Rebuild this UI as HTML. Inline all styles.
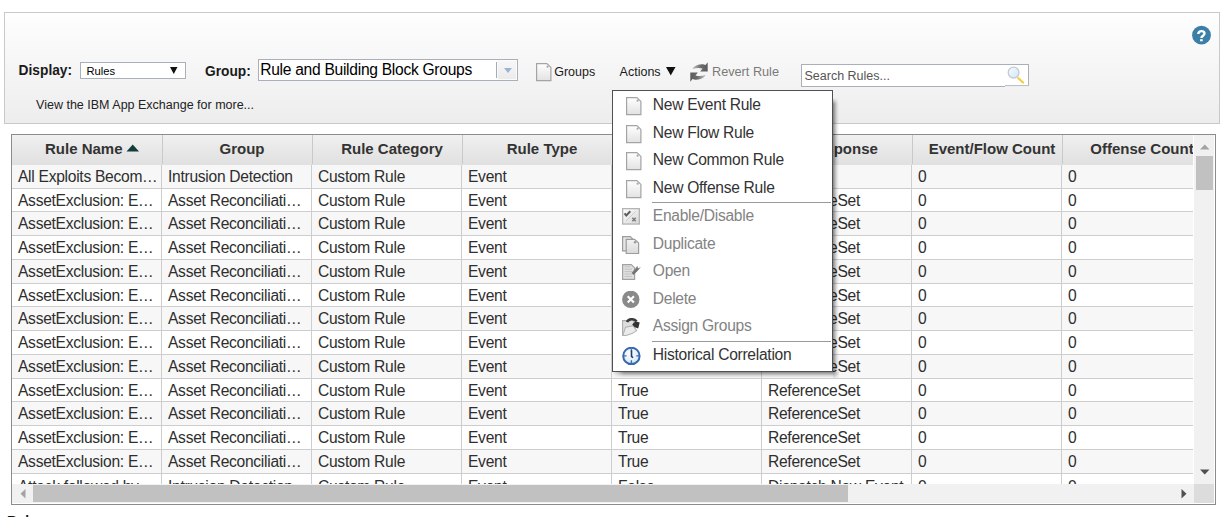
<!DOCTYPE html>
<html><head><meta charset="utf-8"><title>Rules</title>
<style>
html,body{margin:0;padding:0;width:1230px;height:517px;overflow:hidden;background:#fff;font-family:"Liberation Sans",sans-serif;}
.a{position:absolute;white-space:nowrap;}
.b{position:absolute;box-sizing:border-box;}
</style></head><body>

<div class="b" style="left:4px;top:12px;width:1216px;height:112px;border:1px solid #c9c9c9;background:linear-gradient(#fefefe,#ededed);"></div>
<svg class="a" style="left:1188px;top:22px" width="26" height="26"><circle cx="13.5" cy="13.2" r="9.4" fill="#3b7ea7"/><path d="M10.3 12C10.3 10 11.7 9.1 13.4 9.1C15.2 9.1 16.5 10.1 16.5 11.6C16.5 13.7 13.4 13.7 13.4 15.9" fill="none" stroke="#fff" stroke-width="2.4"/><rect x="12.1" y="17.2" width="2.6" height="2.1" fill="#fff"/></svg>
<div class="a" style="left:18.60px;top:62.64px;font-size:13.75px;line-height:16px;font-weight:bold;color:#1a1a1a;">Display:</div>
<div class="b" style="left:80px;top:62px;width:106px;height:17px;border:1px solid #a9b0ba;background:#fff;"></div>
<div class="a" style="left:86.50px;top:65.02px;font-size:11.2px;line-height:13px;font-weight:normal;color:#000;">Rules</div>
<svg class="a" style="left:170px;top:67px" width="8" height="7"><path d="M0 0H7.5L3.75 7Z" fill="#111"/></svg>
<div class="a" style="left:205.00px;top:63.54px;font-size:13.75px;line-height:16px;font-weight:bold;color:#1a1a1a;">Group:</div>
<div class="b" style="left:258px;top:59px;width:260px;height:22px;border:1px solid #a9b0ba;background:#fff;"></div>
<div class="b" style="left:497px;top:60px;width:20px;height:20px;border:1px solid #fbfbfb;background:linear-gradient(#f7f7f7,#ebebeb);"></div>
<div class="b" style="left:496px;top:62px;width:1px;height:16px;background:#a3abb8;"></div>
<svg class="a" style="left:503.5px;top:68px" width="8" height="5"><path d="M0 0H8L4 5Z" fill="#9cb3d6"/></svg>
<div class="a" style="left:260.20px;top:60.49px;font-size:15.6px;line-height:19px;font-weight:normal;color:#000;letter-spacing:-0.28px">Rule and Building Block Groups</div>
<svg class="a" style="left:536px;top:63px" width="16" height="19"><defs><linearGradient id="gd0" x1="0" y1="0" x2="0" y2="1"><stop offset="0" stop-color="#ffffff"/><stop offset="1" stop-color="#e2e2e2"/></linearGradient></defs><path d="M0.6 0.6H10.9L14.9 4.4V17.6H0.6Z" fill="url(#gd0)" stroke="#a4a4a4" stroke-width="1.2"/><circle cx="11.6" cy="3.7" r="1.1" fill="#a8a8a8"/></svg>
<div class="a" style="left:554.20px;top:64.67px;font-size:12.5px;line-height:15px;font-weight:normal;color:#1a1a1a;">Groups</div>
<div class="a" style="left:619.60px;top:64.67px;font-size:12.5px;line-height:15px;font-weight:normal;color:#1a1a1a;">Actions</div>
<svg class="a" style="left:666px;top:67px" width="10" height="9"><path d="M0 0H9.5L4.75 8.5Z" fill="#111"/></svg>
<svg class="a" style="left:686px;top:58px" width="26" height="26"><defs><linearGradient id="rg" x1="0" y1="0" x2="1" y2="0"><stop offset="0" stop-color="#c4c4c4"/><stop offset="0.55" stop-color="#6a6a6a"/><stop offset="1" stop-color="#5c5c5c"/></linearGradient></defs><path id="ra" d="M6.5 10.5C9 7.5 12.5 6.2 17 6.3L19.5 7L21.7 4.3V13.6H14.1L16.55 10.6C13.5 9.6 10 9.6 7 10.9Z" fill="url(#rg)"/><path d="M6.5 10.5C9 7.5 12.5 6.2 17 6.3L19.5 7L21.7 4.3V13.6H14.1L16.55 10.6C13.5 9.6 10 9.6 7 10.9Z" fill="url(#rg)" transform="rotate(180 13 14)"/></svg>
<div class="a" style="left:712.00px;top:64.60px;font-size:12.7px;line-height:15px;font-weight:normal;color:#7a7a7a;">Revert Rule</div>
<div class="b" style="left:801px;top:64px;width:228px;height:23px;border:1px solid #a9b0ba;background:#fff;"></div>
<div class="b" style="left:1005px;top:86px;width:24px;height:1px;background:#efefef;"></div><div class="b" style="left:1005px;top:85px;width:24px;height:1px;background:#b9c0c9;"></div>
<div class="a" style="left:804.50px;top:68.67px;font-size:12.5px;line-height:15px;font-weight:normal;color:#555;">Search Rules...</div>
<svg class="a" style="left:1006px;top:65px" width="21" height="21"><defs><linearGradient id="gm" x1="0" y1="0" x2="1" y2="1"><stop offset="0" stop-color="#f6fbff"/><stop offset="1" stop-color="#d2e6f5"/></linearGradient></defs><path d="M12.3 13.2L17.1 17.5" stroke="#f3cd40" stroke-width="2.2" stroke-linecap="round"/><circle cx="7.6" cy="7.6" r="5.4" fill="url(#gm)" stroke="#c2cbd1" stroke-width="1.3"/></svg>
<div class="a" style="left:36.10px;top:97.57px;font-size:12.5px;line-height:15px;font-weight:normal;color:#222;">View the IBM App Exchange for more...</div>
<div class="b" style="left:11px;top:134px;width:1205px;height:371px;border:1px solid #8c8c8c;background:#fff;overflow:hidden;">
<div class="b" style="left:0;top:0;width:1181px;height:30px;background:linear-gradient(#f0f0f0,#e0e0e0);"></div>
<div class="b" style="left:150px;top:0;width:1px;height:29px;background:#c9c9c9;"></div>
<div class="b" style="left:300px;top:0;width:1px;height:29px;background:#c9c9c9;"></div>
<div class="b" style="left:450px;top:0;width:1px;height:29px;background:#c9c9c9;"></div>
<div class="b" style="left:600px;top:0;width:1px;height:29px;background:#c9c9c9;"></div>
<div class="b" style="left:750px;top:0;width:1px;height:29px;background:#c9c9c9;"></div>
<div class="b" style="left:900px;top:0;width:1px;height:29px;background:#c9c9c9;"></div>
<div class="b" style="left:1050px;top:0;width:1px;height:29px;background:#c9c9c9;"></div>
<div class="b" style="left:0;top:30px;width:1181px;height:23px;background:#f7f7f7;"></div>
<div class="b" style="left:0;top:54px;width:1181px;height:22px;background:#ffffff;"></div>
<div class="b" style="left:0;top:77px;width:1181px;height:23px;background:#f7f7f7;"></div>
<div class="b" style="left:0;top:101px;width:1181px;height:23px;background:#ffffff;"></div>
<div class="b" style="left:0;top:125px;width:1181px;height:23px;background:#f7f7f7;"></div>
<div class="b" style="left:0;top:149px;width:1181px;height:22px;background:#ffffff;"></div>
<div class="b" style="left:0;top:172px;width:1181px;height:23px;background:#f7f7f7;"></div>
<div class="b" style="left:0;top:196px;width:1181px;height:23px;background:#ffffff;"></div>
<div class="b" style="left:0;top:220px;width:1181px;height:23px;background:#f7f7f7;"></div>
<div class="b" style="left:0;top:244px;width:1181px;height:22px;background:#ffffff;"></div>
<div class="b" style="left:0;top:267px;width:1181px;height:23px;background:#f7f7f7;"></div>
<div class="b" style="left:0;top:291px;width:1181px;height:23px;background:#ffffff;"></div>
<div class="b" style="left:0;top:315px;width:1181px;height:23px;background:#f7f7f7;"></div>
<div class="b" style="left:0;top:339px;width:1181px;height:10px;background:#ffffff;"></div>
<div class="b" style="left:0;top:53px;width:1181px;height:1px;background:#cdcdcd;"></div>
<div class="b" style="left:0;top:76px;width:1181px;height:1px;background:#cdcdcd;"></div>
<div class="b" style="left:0;top:100px;width:1181px;height:1px;background:#cdcdcd;"></div>
<div class="b" style="left:0;top:124px;width:1181px;height:1px;background:#cdcdcd;"></div>
<div class="b" style="left:0;top:148px;width:1181px;height:1px;background:#cdcdcd;"></div>
<div class="b" style="left:0;top:171px;width:1181px;height:1px;background:#cdcdcd;"></div>
<div class="b" style="left:0;top:195px;width:1181px;height:1px;background:#cdcdcd;"></div>
<div class="b" style="left:0;top:219px;width:1181px;height:1px;background:#cdcdcd;"></div>
<div class="b" style="left:0;top:243px;width:1181px;height:1px;background:#cdcdcd;"></div>
<div class="b" style="left:0;top:266px;width:1181px;height:1px;background:#cdcdcd;"></div>
<div class="b" style="left:0;top:290px;width:1181px;height:1px;background:#cdcdcd;"></div>
<div class="b" style="left:0;top:314px;width:1181px;height:1px;background:#cdcdcd;"></div>
<div class="b" style="left:0;top:338px;width:1181px;height:1px;background:#cdcdcd;"></div>
<div class="b" style="left:149px;top:30px;width:1px;height:319px;background:#cdcdcd;"></div>
<div class="b" style="left:299px;top:30px;width:1px;height:319px;background:#cdcdcd;"></div>
<div class="b" style="left:449px;top:30px;width:1px;height:319px;background:#cdcdcd;"></div>
<div class="b" style="left:599px;top:30px;width:1px;height:319px;background:#cdcdcd;"></div>
<div class="b" style="left:749px;top:30px;width:1px;height:319px;background:#cdcdcd;"></div>
<div class="b" style="left:899px;top:30px;width:1px;height:319px;background:#cdcdcd;"></div>
<div class="b" style="left:1049px;top:30px;width:1px;height:319px;background:#cdcdcd;"></div>
<div class="a" style="left:6.00px;top:32.09px;font-size:15.6px;line-height:19px;font-weight:normal;color:#2e2e2e;letter-spacing:-0.28px">All Exploits Becom…</div>
<div class="a" style="left:156.00px;top:32.09px;font-size:15.6px;line-height:19px;font-weight:normal;color:#2e2e2e;letter-spacing:-0.28px">Intrusion Detection</div>
<div class="a" style="left:306.00px;top:32.09px;font-size:15.6px;line-height:19px;font-weight:normal;color:#2e2e2e;letter-spacing:-0.28px">Custom Rule</div>
<div class="a" style="left:456.00px;top:32.09px;font-size:15.6px;line-height:19px;font-weight:normal;color:#2e2e2e;letter-spacing:-0.28px">Event</div>
<div class="a" style="left:606.00px;top:32.09px;font-size:15.6px;line-height:19px;font-weight:normal;color:#2e2e2e;letter-spacing:-0.28px">True</div>
<div class="a" style="left:906.00px;top:32.09px;font-size:15.6px;line-height:19px;font-weight:normal;color:#2e2e2e;letter-spacing:-0.28px">0</div>
<div class="a" style="left:1056.00px;top:32.09px;font-size:15.6px;line-height:19px;font-weight:normal;color:#2e2e2e;letter-spacing:-0.28px">0</div>
<div class="a" style="left:6.00px;top:56.09px;font-size:15.6px;line-height:19px;font-weight:normal;color:#2e2e2e;letter-spacing:-0.28px">AssetExclusion: E…</div>
<div class="a" style="left:156.00px;top:56.09px;font-size:15.6px;line-height:19px;font-weight:normal;color:#2e2e2e;letter-spacing:-0.28px">Asset Reconciliati…</div>
<div class="a" style="left:306.00px;top:56.09px;font-size:15.6px;line-height:19px;font-weight:normal;color:#2e2e2e;letter-spacing:-0.28px">Custom Rule</div>
<div class="a" style="left:456.00px;top:56.09px;font-size:15.6px;line-height:19px;font-weight:normal;color:#2e2e2e;letter-spacing:-0.28px">Event</div>
<div class="a" style="left:606.00px;top:56.09px;font-size:15.6px;line-height:19px;font-weight:normal;color:#2e2e2e;letter-spacing:-0.28px">True</div>
<div class="a" style="left:756.00px;top:56.09px;font-size:15.6px;line-height:19px;font-weight:normal;color:#2e2e2e;letter-spacing:-0.28px">ReferenceSet</div>
<div class="a" style="left:906.00px;top:56.09px;font-size:15.6px;line-height:19px;font-weight:normal;color:#2e2e2e;letter-spacing:-0.28px">0</div>
<div class="a" style="left:1056.00px;top:56.09px;font-size:15.6px;line-height:19px;font-weight:normal;color:#2e2e2e;letter-spacing:-0.28px">0</div>
<div class="a" style="left:6.00px;top:79.09px;font-size:15.6px;line-height:19px;font-weight:normal;color:#2e2e2e;letter-spacing:-0.28px">AssetExclusion: E…</div>
<div class="a" style="left:156.00px;top:79.09px;font-size:15.6px;line-height:19px;font-weight:normal;color:#2e2e2e;letter-spacing:-0.28px">Asset Reconciliati…</div>
<div class="a" style="left:306.00px;top:79.09px;font-size:15.6px;line-height:19px;font-weight:normal;color:#2e2e2e;letter-spacing:-0.28px">Custom Rule</div>
<div class="a" style="left:456.00px;top:79.09px;font-size:15.6px;line-height:19px;font-weight:normal;color:#2e2e2e;letter-spacing:-0.28px">Event</div>
<div class="a" style="left:606.00px;top:79.09px;font-size:15.6px;line-height:19px;font-weight:normal;color:#2e2e2e;letter-spacing:-0.28px">True</div>
<div class="a" style="left:756.00px;top:79.09px;font-size:15.6px;line-height:19px;font-weight:normal;color:#2e2e2e;letter-spacing:-0.28px">ReferenceSet</div>
<div class="a" style="left:906.00px;top:79.09px;font-size:15.6px;line-height:19px;font-weight:normal;color:#2e2e2e;letter-spacing:-0.28px">0</div>
<div class="a" style="left:1056.00px;top:79.09px;font-size:15.6px;line-height:19px;font-weight:normal;color:#2e2e2e;letter-spacing:-0.28px">0</div>
<div class="a" style="left:6.00px;top:103.09px;font-size:15.6px;line-height:19px;font-weight:normal;color:#2e2e2e;letter-spacing:-0.28px">AssetExclusion: E…</div>
<div class="a" style="left:156.00px;top:103.09px;font-size:15.6px;line-height:19px;font-weight:normal;color:#2e2e2e;letter-spacing:-0.28px">Asset Reconciliati…</div>
<div class="a" style="left:306.00px;top:103.09px;font-size:15.6px;line-height:19px;font-weight:normal;color:#2e2e2e;letter-spacing:-0.28px">Custom Rule</div>
<div class="a" style="left:456.00px;top:103.09px;font-size:15.6px;line-height:19px;font-weight:normal;color:#2e2e2e;letter-spacing:-0.28px">Event</div>
<div class="a" style="left:606.00px;top:103.09px;font-size:15.6px;line-height:19px;font-weight:normal;color:#2e2e2e;letter-spacing:-0.28px">True</div>
<div class="a" style="left:756.00px;top:103.09px;font-size:15.6px;line-height:19px;font-weight:normal;color:#2e2e2e;letter-spacing:-0.28px">ReferenceSet</div>
<div class="a" style="left:906.00px;top:103.09px;font-size:15.6px;line-height:19px;font-weight:normal;color:#2e2e2e;letter-spacing:-0.28px">0</div>
<div class="a" style="left:1056.00px;top:103.09px;font-size:15.6px;line-height:19px;font-weight:normal;color:#2e2e2e;letter-spacing:-0.28px">0</div>
<div class="a" style="left:6.00px;top:127.09px;font-size:15.6px;line-height:19px;font-weight:normal;color:#2e2e2e;letter-spacing:-0.28px">AssetExclusion: E…</div>
<div class="a" style="left:156.00px;top:127.09px;font-size:15.6px;line-height:19px;font-weight:normal;color:#2e2e2e;letter-spacing:-0.28px">Asset Reconciliati…</div>
<div class="a" style="left:306.00px;top:127.09px;font-size:15.6px;line-height:19px;font-weight:normal;color:#2e2e2e;letter-spacing:-0.28px">Custom Rule</div>
<div class="a" style="left:456.00px;top:127.09px;font-size:15.6px;line-height:19px;font-weight:normal;color:#2e2e2e;letter-spacing:-0.28px">Event</div>
<div class="a" style="left:606.00px;top:127.09px;font-size:15.6px;line-height:19px;font-weight:normal;color:#2e2e2e;letter-spacing:-0.28px">True</div>
<div class="a" style="left:756.00px;top:127.09px;font-size:15.6px;line-height:19px;font-weight:normal;color:#2e2e2e;letter-spacing:-0.28px">ReferenceSet</div>
<div class="a" style="left:906.00px;top:127.09px;font-size:15.6px;line-height:19px;font-weight:normal;color:#2e2e2e;letter-spacing:-0.28px">0</div>
<div class="a" style="left:1056.00px;top:127.09px;font-size:15.6px;line-height:19px;font-weight:normal;color:#2e2e2e;letter-spacing:-0.28px">0</div>
<div class="a" style="left:6.00px;top:151.09px;font-size:15.6px;line-height:19px;font-weight:normal;color:#2e2e2e;letter-spacing:-0.28px">AssetExclusion: E…</div>
<div class="a" style="left:156.00px;top:151.09px;font-size:15.6px;line-height:19px;font-weight:normal;color:#2e2e2e;letter-spacing:-0.28px">Asset Reconciliati…</div>
<div class="a" style="left:306.00px;top:151.09px;font-size:15.6px;line-height:19px;font-weight:normal;color:#2e2e2e;letter-spacing:-0.28px">Custom Rule</div>
<div class="a" style="left:456.00px;top:151.09px;font-size:15.6px;line-height:19px;font-weight:normal;color:#2e2e2e;letter-spacing:-0.28px">Event</div>
<div class="a" style="left:606.00px;top:151.09px;font-size:15.6px;line-height:19px;font-weight:normal;color:#2e2e2e;letter-spacing:-0.28px">True</div>
<div class="a" style="left:756.00px;top:151.09px;font-size:15.6px;line-height:19px;font-weight:normal;color:#2e2e2e;letter-spacing:-0.28px">ReferenceSet</div>
<div class="a" style="left:906.00px;top:151.09px;font-size:15.6px;line-height:19px;font-weight:normal;color:#2e2e2e;letter-spacing:-0.28px">0</div>
<div class="a" style="left:1056.00px;top:151.09px;font-size:15.6px;line-height:19px;font-weight:normal;color:#2e2e2e;letter-spacing:-0.28px">0</div>
<div class="a" style="left:6.00px;top:174.09px;font-size:15.6px;line-height:19px;font-weight:normal;color:#2e2e2e;letter-spacing:-0.28px">AssetExclusion: E…</div>
<div class="a" style="left:156.00px;top:174.09px;font-size:15.6px;line-height:19px;font-weight:normal;color:#2e2e2e;letter-spacing:-0.28px">Asset Reconciliati…</div>
<div class="a" style="left:306.00px;top:174.09px;font-size:15.6px;line-height:19px;font-weight:normal;color:#2e2e2e;letter-spacing:-0.28px">Custom Rule</div>
<div class="a" style="left:456.00px;top:174.09px;font-size:15.6px;line-height:19px;font-weight:normal;color:#2e2e2e;letter-spacing:-0.28px">Event</div>
<div class="a" style="left:606.00px;top:174.09px;font-size:15.6px;line-height:19px;font-weight:normal;color:#2e2e2e;letter-spacing:-0.28px">True</div>
<div class="a" style="left:756.00px;top:174.09px;font-size:15.6px;line-height:19px;font-weight:normal;color:#2e2e2e;letter-spacing:-0.28px">ReferenceSet</div>
<div class="a" style="left:906.00px;top:174.09px;font-size:15.6px;line-height:19px;font-weight:normal;color:#2e2e2e;letter-spacing:-0.28px">0</div>
<div class="a" style="left:1056.00px;top:174.09px;font-size:15.6px;line-height:19px;font-weight:normal;color:#2e2e2e;letter-spacing:-0.28px">0</div>
<div class="a" style="left:6.00px;top:198.09px;font-size:15.6px;line-height:19px;font-weight:normal;color:#2e2e2e;letter-spacing:-0.28px">AssetExclusion: E…</div>
<div class="a" style="left:156.00px;top:198.09px;font-size:15.6px;line-height:19px;font-weight:normal;color:#2e2e2e;letter-spacing:-0.28px">Asset Reconciliati…</div>
<div class="a" style="left:306.00px;top:198.09px;font-size:15.6px;line-height:19px;font-weight:normal;color:#2e2e2e;letter-spacing:-0.28px">Custom Rule</div>
<div class="a" style="left:456.00px;top:198.09px;font-size:15.6px;line-height:19px;font-weight:normal;color:#2e2e2e;letter-spacing:-0.28px">Event</div>
<div class="a" style="left:606.00px;top:198.09px;font-size:15.6px;line-height:19px;font-weight:normal;color:#2e2e2e;letter-spacing:-0.28px">True</div>
<div class="a" style="left:756.00px;top:198.09px;font-size:15.6px;line-height:19px;font-weight:normal;color:#2e2e2e;letter-spacing:-0.28px">ReferenceSet</div>
<div class="a" style="left:906.00px;top:198.09px;font-size:15.6px;line-height:19px;font-weight:normal;color:#2e2e2e;letter-spacing:-0.28px">0</div>
<div class="a" style="left:1056.00px;top:198.09px;font-size:15.6px;line-height:19px;font-weight:normal;color:#2e2e2e;letter-spacing:-0.28px">0</div>
<div class="a" style="left:6.00px;top:222.09px;font-size:15.6px;line-height:19px;font-weight:normal;color:#2e2e2e;letter-spacing:-0.28px">AssetExclusion: E…</div>
<div class="a" style="left:156.00px;top:222.09px;font-size:15.6px;line-height:19px;font-weight:normal;color:#2e2e2e;letter-spacing:-0.28px">Asset Reconciliati…</div>
<div class="a" style="left:306.00px;top:222.09px;font-size:15.6px;line-height:19px;font-weight:normal;color:#2e2e2e;letter-spacing:-0.28px">Custom Rule</div>
<div class="a" style="left:456.00px;top:222.09px;font-size:15.6px;line-height:19px;font-weight:normal;color:#2e2e2e;letter-spacing:-0.28px">Event</div>
<div class="a" style="left:606.00px;top:222.09px;font-size:15.6px;line-height:19px;font-weight:normal;color:#2e2e2e;letter-spacing:-0.28px">True</div>
<div class="a" style="left:756.00px;top:222.09px;font-size:15.6px;line-height:19px;font-weight:normal;color:#2e2e2e;letter-spacing:-0.28px">ReferenceSet</div>
<div class="a" style="left:906.00px;top:222.09px;font-size:15.6px;line-height:19px;font-weight:normal;color:#2e2e2e;letter-spacing:-0.28px">0</div>
<div class="a" style="left:1056.00px;top:222.09px;font-size:15.6px;line-height:19px;font-weight:normal;color:#2e2e2e;letter-spacing:-0.28px">0</div>
<div class="a" style="left:6.00px;top:246.09px;font-size:15.6px;line-height:19px;font-weight:normal;color:#2e2e2e;letter-spacing:-0.28px">AssetExclusion: E…</div>
<div class="a" style="left:156.00px;top:246.09px;font-size:15.6px;line-height:19px;font-weight:normal;color:#2e2e2e;letter-spacing:-0.28px">Asset Reconciliati…</div>
<div class="a" style="left:306.00px;top:246.09px;font-size:15.6px;line-height:19px;font-weight:normal;color:#2e2e2e;letter-spacing:-0.28px">Custom Rule</div>
<div class="a" style="left:456.00px;top:246.09px;font-size:15.6px;line-height:19px;font-weight:normal;color:#2e2e2e;letter-spacing:-0.28px">Event</div>
<div class="a" style="left:606.00px;top:246.09px;font-size:15.6px;line-height:19px;font-weight:normal;color:#2e2e2e;letter-spacing:-0.28px">True</div>
<div class="a" style="left:756.00px;top:246.09px;font-size:15.6px;line-height:19px;font-weight:normal;color:#2e2e2e;letter-spacing:-0.28px">ReferenceSet</div>
<div class="a" style="left:906.00px;top:246.09px;font-size:15.6px;line-height:19px;font-weight:normal;color:#2e2e2e;letter-spacing:-0.28px">0</div>
<div class="a" style="left:1056.00px;top:246.09px;font-size:15.6px;line-height:19px;font-weight:normal;color:#2e2e2e;letter-spacing:-0.28px">0</div>
<div class="a" style="left:6.00px;top:269.09px;font-size:15.6px;line-height:19px;font-weight:normal;color:#2e2e2e;letter-spacing:-0.28px">AssetExclusion: E…</div>
<div class="a" style="left:156.00px;top:269.09px;font-size:15.6px;line-height:19px;font-weight:normal;color:#2e2e2e;letter-spacing:-0.28px">Asset Reconciliati…</div>
<div class="a" style="left:306.00px;top:269.09px;font-size:15.6px;line-height:19px;font-weight:normal;color:#2e2e2e;letter-spacing:-0.28px">Custom Rule</div>
<div class="a" style="left:456.00px;top:269.09px;font-size:15.6px;line-height:19px;font-weight:normal;color:#2e2e2e;letter-spacing:-0.28px">Event</div>
<div class="a" style="left:606.00px;top:269.09px;font-size:15.6px;line-height:19px;font-weight:normal;color:#2e2e2e;letter-spacing:-0.28px">True</div>
<div class="a" style="left:756.00px;top:269.09px;font-size:15.6px;line-height:19px;font-weight:normal;color:#2e2e2e;letter-spacing:-0.28px">ReferenceSet</div>
<div class="a" style="left:906.00px;top:269.09px;font-size:15.6px;line-height:19px;font-weight:normal;color:#2e2e2e;letter-spacing:-0.28px">0</div>
<div class="a" style="left:1056.00px;top:269.09px;font-size:15.6px;line-height:19px;font-weight:normal;color:#2e2e2e;letter-spacing:-0.28px">0</div>
<div class="a" style="left:6.00px;top:293.09px;font-size:15.6px;line-height:19px;font-weight:normal;color:#2e2e2e;letter-spacing:-0.28px">AssetExclusion: E…</div>
<div class="a" style="left:156.00px;top:293.09px;font-size:15.6px;line-height:19px;font-weight:normal;color:#2e2e2e;letter-spacing:-0.28px">Asset Reconciliati…</div>
<div class="a" style="left:306.00px;top:293.09px;font-size:15.6px;line-height:19px;font-weight:normal;color:#2e2e2e;letter-spacing:-0.28px">Custom Rule</div>
<div class="a" style="left:456.00px;top:293.09px;font-size:15.6px;line-height:19px;font-weight:normal;color:#2e2e2e;letter-spacing:-0.28px">Event</div>
<div class="a" style="left:606.00px;top:293.09px;font-size:15.6px;line-height:19px;font-weight:normal;color:#2e2e2e;letter-spacing:-0.28px">True</div>
<div class="a" style="left:756.00px;top:293.09px;font-size:15.6px;line-height:19px;font-weight:normal;color:#2e2e2e;letter-spacing:-0.28px">ReferenceSet</div>
<div class="a" style="left:906.00px;top:293.09px;font-size:15.6px;line-height:19px;font-weight:normal;color:#2e2e2e;letter-spacing:-0.28px">0</div>
<div class="a" style="left:1056.00px;top:293.09px;font-size:15.6px;line-height:19px;font-weight:normal;color:#2e2e2e;letter-spacing:-0.28px">0</div>
<div class="a" style="left:6.00px;top:317.09px;font-size:15.6px;line-height:19px;font-weight:normal;color:#2e2e2e;letter-spacing:-0.28px">AssetExclusion: E…</div>
<div class="a" style="left:156.00px;top:317.09px;font-size:15.6px;line-height:19px;font-weight:normal;color:#2e2e2e;letter-spacing:-0.28px">Asset Reconciliati…</div>
<div class="a" style="left:306.00px;top:317.09px;font-size:15.6px;line-height:19px;font-weight:normal;color:#2e2e2e;letter-spacing:-0.28px">Custom Rule</div>
<div class="a" style="left:456.00px;top:317.09px;font-size:15.6px;line-height:19px;font-weight:normal;color:#2e2e2e;letter-spacing:-0.28px">Event</div>
<div class="a" style="left:606.00px;top:317.09px;font-size:15.6px;line-height:19px;font-weight:normal;color:#2e2e2e;letter-spacing:-0.28px">True</div>
<div class="a" style="left:756.00px;top:317.09px;font-size:15.6px;line-height:19px;font-weight:normal;color:#2e2e2e;letter-spacing:-0.28px">ReferenceSet</div>
<div class="a" style="left:906.00px;top:317.09px;font-size:15.6px;line-height:19px;font-weight:normal;color:#2e2e2e;letter-spacing:-0.28px">0</div>
<div class="a" style="left:1056.00px;top:317.09px;font-size:15.6px;line-height:19px;font-weight:normal;color:#2e2e2e;letter-spacing:-0.28px">0</div>
<div class="a" style="left:6.00px;top:342.09px;font-size:15.6px;line-height:19px;font-weight:normal;color:#2e2e2e;letter-spacing:-0.28px">Attack followed by…</div>
<div class="a" style="left:156.00px;top:342.09px;font-size:15.6px;line-height:19px;font-weight:normal;color:#2e2e2e;letter-spacing:-0.28px">Intrusion Detection…</div>
<div class="a" style="left:306.00px;top:342.09px;font-size:15.6px;line-height:19px;font-weight:normal;color:#2e2e2e;letter-spacing:-0.28px">Custom Rule</div>
<div class="a" style="left:456.00px;top:342.09px;font-size:15.6px;line-height:19px;font-weight:normal;color:#2e2e2e;letter-spacing:-0.28px">Event</div>
<div class="a" style="left:606.00px;top:342.09px;font-size:15.6px;line-height:19px;font-weight:normal;color:#2e2e2e;letter-spacing:-0.28px">False</div>
<div class="a" style="left:756.00px;top:342.09px;font-size:15.6px;line-height:19px;font-weight:normal;color:#2e2e2e;letter-spacing:-0.28px">Dispatch New Event</div>
<div class="a" style="left:906.00px;top:342.09px;font-size:15.6px;line-height:19px;font-weight:normal;color:#2e2e2e;letter-spacing:-0.28px">0</div>
<div class="a" style="left:1056.00px;top:342.09px;font-size:15.6px;line-height:19px;font-weight:normal;color:#2e2e2e;letter-spacing:-0.28px">0</div>
<div class="a" style="left:33px;top:5.40px;font-size:15px;line-height:17px;font-weight:bold;color:#333;">Rule Name</div>
<svg class="a" style="left:113.5px;top:9px" width="14" height="8"><path d="M0.5 7.5L6.75 0.6L13 7.5Z" fill="#123d3d"/></svg>
<div class="a" style="left:160px;top:5.40px;width:140px;text-align:center;font-size:15px;line-height:17px;font-weight:bold;color:#333;overflow:hidden">Group</div>
<div class="a" style="left:310px;top:5.40px;width:140px;text-align:center;font-size:15px;line-height:17px;font-weight:bold;color:#333;overflow:hidden">Rule Category</div>
<div class="a" style="left:460px;top:5.40px;width:140px;text-align:center;font-size:15px;line-height:17px;font-weight:bold;color:#333;overflow:hidden">Rule Type</div>
<div class="a" style="left:610px;top:5.40px;width:140px;text-align:center;font-size:15px;line-height:17px;font-weight:bold;color:#333;overflow:hidden">Enabled</div>
<div class="a" style="left:760px;top:5.40px;width:140px;text-align:center;font-size:15px;line-height:17px;font-weight:bold;color:#333;overflow:hidden">Response</div>
<div class="a" style="left:910px;top:5.40px;width:140px;text-align:center;font-size:15px;line-height:17px;font-weight:bold;color:#333;overflow:hidden">Event/Flow Count</div>
<div class="a" style="left:1060px;top:5.40px;width:140px;text-align:center;font-size:15px;line-height:17px;font-weight:bold;color:#333;overflow:hidden">Offense Count</div>
</div>
<div class="b" style="left:1193px;top:135px;width:1px;height:349px;background:#fff;"></div>
<div class="b" style="left:1194px;top:135px;width:20px;height:349px;background:#f1f1f1;"></div>
<svg class="a" style="left:1199.5px;top:143.5px" width="10" height="6"><path d="M0 5.5L4.75 0.5L9.5 5.5Z" fill="#a3a3a3"/></svg>
<div class="b" style="left:1196px;top:156px;width:17px;height:34px;background:#c1c1c1;"></div>
<svg class="a" style="left:1199.5px;top:468.5px" width="10" height="6"><path d="M0 0.5H9.5L4.75 5.5Z" fill="#505050"/></svg>
<div class="b" style="left:12px;top:484px;width:1182px;height:19px;background:#f1f1f1;"></div>
<div class="b" style="left:1194px;top:484px;width:20px;height:19px;background:#dcdcdc;"></div>
<svg class="a" style="left:19.5px;top:488.5px" width="6" height="10"><path d="M5.5 0L0.5 4.75L5.5 9.5Z" fill="#a3a3a3"/></svg>
<div class="b" style="left:33px;top:485px;width:815px;height:17px;background:#c1c1c1;"></div>
<svg class="a" style="left:1180.5px;top:488.5px" width="6" height="10"><path d="M0.5 0L5.5 4.75L0.5 9.5Z" fill="#505050"/></svg>
<div class="a" style="left:7.00px;top:514.04px;font-size:13.75px;line-height:16px;font-weight:bold;color:#111;">Rules</div>
<div class="b" style="left:833px;top:98px;width:6px;height:274px;background:linear-gradient(to right,rgba(0,0,0,0.45),rgba(0,0,0,0.12) 60%,rgba(0,0,0,0));-webkit-mask-image:linear-gradient(to bottom,transparent,#000 6px);"></div>
<div class="b" style="left:612px;top:372px;width:221px;height:6px;background:linear-gradient(to bottom,rgba(0,0,0,0.45),rgba(0,0,0,0.12) 60%,rgba(0,0,0,0));-webkit-mask-image:linear-gradient(to right,transparent,#000 12px);"></div>
<div class="b" style="left:833px;top:372px;width:6px;height:6px;background:radial-gradient(circle at 0 0,rgba(0,0,0,0.42),rgba(0,0,0,0.1) 60%,rgba(0,0,0,0) 95%);"></div>
<div class="b" style="left:612px;top:90px;width:221px;height:282px;border:1px solid #505050;background:#fff;"></div>
<svg class="a" style="left:626px;top:97px" width="16" height="19"><defs><linearGradient id="gd" x1="0" y1="0" x2="0" y2="1"><stop offset="0" stop-color="#ffffff"/><stop offset="1" stop-color="#e2e2e2"/></linearGradient></defs><path d="M0.6 0.6H10.9L14.9 4.4V17.6H0.6Z" fill="url(#gd)" stroke="#a4a4a4" stroke-width="1.2"/><circle cx="11.6" cy="3.7" r="1.1" fill="#a8a8a8"/></svg>
<div class="a" style="left:652.80px;top:95.29px;font-size:15.6px;line-height:19px;font-weight:normal;color:#333;letter-spacing:-0.28px">New Event Rule</div>
<svg class="a" style="left:626px;top:125px" width="16" height="19"><defs><linearGradient id="gd" x1="0" y1="0" x2="0" y2="1"><stop offset="0" stop-color="#ffffff"/><stop offset="1" stop-color="#e2e2e2"/></linearGradient></defs><path d="M0.6 0.6H10.9L14.9 4.4V17.6H0.6Z" fill="url(#gd)" stroke="#a4a4a4" stroke-width="1.2"/><circle cx="11.6" cy="3.7" r="1.1" fill="#a8a8a8"/></svg>
<div class="a" style="left:652.80px;top:123.29px;font-size:15.6px;line-height:19px;font-weight:normal;color:#333;letter-spacing:-0.28px">New Flow Rule</div>
<svg class="a" style="left:626px;top:152px" width="16" height="19"><defs><linearGradient id="gd" x1="0" y1="0" x2="0" y2="1"><stop offset="0" stop-color="#ffffff"/><stop offset="1" stop-color="#e2e2e2"/></linearGradient></defs><path d="M0.6 0.6H10.9L14.9 4.4V17.6H0.6Z" fill="url(#gd)" stroke="#a4a4a4" stroke-width="1.2"/><circle cx="11.6" cy="3.7" r="1.1" fill="#a8a8a8"/></svg>
<div class="a" style="left:652.80px;top:150.29px;font-size:15.6px;line-height:19px;font-weight:normal;color:#333;letter-spacing:-0.28px">New Common Rule</div>
<svg class="a" style="left:626px;top:180px" width="16" height="19"><defs><linearGradient id="gd" x1="0" y1="0" x2="0" y2="1"><stop offset="0" stop-color="#ffffff"/><stop offset="1" stop-color="#e2e2e2"/></linearGradient></defs><path d="M0.6 0.6H10.9L14.9 4.4V17.6H0.6Z" fill="url(#gd)" stroke="#a4a4a4" stroke-width="1.2"/><circle cx="11.6" cy="3.7" r="1.1" fill="#a8a8a8"/></svg>
<div class="a" style="left:652.80px;top:178.29px;font-size:15.6px;line-height:19px;font-weight:normal;color:#333;letter-spacing:-0.28px">New Offense Rule</div>
<svg class="a" style="left:622px;top:208px" width="18" height="17"><defs><linearGradient id="gc" x1="0" y1="0" x2="1" y2="1"><stop offset="0" stop-color="#ffffff"/><stop offset="1" stop-color="#d6d6d6"/></linearGradient></defs><rect x="0.65" y="0.65" width="16.7" height="15.4" fill="url(#gc)" stroke="#b4b4b4" stroke-width="1.3"/><path d="M4 13.1L13.6 3.3" stroke="#cacaca" stroke-width="1"/><path d="M2.5 5.3L4.3 7.5L8.3 3.3" fill="none" stroke="#5e5e5e" stroke-width="2"/><path d="M10.3 9.8L13.7 13.2M13.7 9.8L10.3 13.2" stroke="#7c7c7c" stroke-width="1.6"/></svg>
<div class="a" style="left:652.80px;top:206.29px;font-size:15.6px;line-height:19px;font-weight:normal;color:#838383;letter-spacing:-0.28px">Enable/Disable</div>
<svg class="a" style="left:622px;top:236px" width="18" height="19"><defs><linearGradient id="gu" x1="0" y1="0" x2="0" y2="1"><stop offset="0" stop-color="#f2f2f2"/><stop offset="1" stop-color="#dadada"/></linearGradient></defs><path d="M0.6 0.6H8.3L10.5 2.8V14.9H0.6Z" fill="#e6e6e6" stroke="#9c9c9c" stroke-width="1.2"/><path d="M4.2 3.3H12.6L16.6 7V17.5H4.2Z" fill="url(#gu)" stroke="#9c9c9c" stroke-width="1.2"/><circle cx="13" cy="6.3" r="1.2" fill="#9a9a9a"/></svg>
<div class="a" style="left:652.80px;top:234.29px;font-size:15.6px;line-height:19px;font-weight:normal;color:#838383;letter-spacing:-0.28px">Duplicate</div>
<svg class="a" style="left:622px;top:264px" width="20" height="17"><defs><linearGradient id="go" x1="0" y1="0" x2="1" y2="1"><stop offset="0" stop-color="#9a9a9a"/><stop offset="1" stop-color="#4e4e4e"/></linearGradient></defs><path d="M0.6 0.6H9.3L12.6 3.9V15.4H0.6Z" fill="#e0e0e0" stroke="#a2a2a2" stroke-width="1.2"/><path d="M2.5 2.8H8.5M2.5 5.2H10M2.5 7.6H10M2.5 10H10M2.5 12.4H10" stroke="#c2c2c2" stroke-width="1"/><path d="M9.6 8.8L13 5L15.4 1.8L16 4.6L18.9 3L15 7.5L11.3 11.1Z" fill="url(#go)"/></svg>
<div class="a" style="left:652.80px;top:261.29px;font-size:15.6px;line-height:19px;font-weight:normal;color:#838383;letter-spacing:-0.28px">Open</div>
<svg class="a" style="left:622px;top:291px" width="18" height="18"><circle cx="8.8" cy="8.4" r="8.7" fill="#8a8a8a"/><path d="M5.7 5.3L11.9 11.5M11.9 5.3L5.7 11.5" stroke="#fff" stroke-width="2.1"/></svg>
<div class="a" style="left:652.80px;top:289.29px;font-size:15.6px;line-height:19px;font-weight:normal;color:#838383;letter-spacing:-0.28px">Delete</div>
<svg class="a" style="left:622px;top:318px" width="19" height="19"><path d="M0.6 2.6H5.8L7.2 1.4H12V12L0.6 17.4Z" fill="#dedede" stroke="#ababab" stroke-width="1.1"/><path d="M0.8 17.4L3.5 9.2L11.2 7.6L14.6 12.6L10 15.6L4 17.5Z" fill="#ebebeb" stroke="#b2b2b2" stroke-width="1.1"/><path d="M5 4C6.5 0.9 11.8 0 14.6 3.4" fill="none" stroke="#3c3c3c" stroke-width="2.5"/><path d="M10.2 6.4L13.5 3.2L17.7 4.6L16.2 10.4L12.8 9.2Z" fill="#333"/></svg>
<div class="a" style="left:652.80px;top:316.29px;font-size:15.6px;line-height:19px;font-weight:normal;color:#838383;letter-spacing:-0.28px">Assign Groups</div>
<svg class="a" style="left:622px;top:347px" width="20" height="20"><defs><radialGradient id="gk" cx="0.4" cy="0.35" r="0.7"><stop offset="0" stop-color="#ffffff"/><stop offset="1" stop-color="#d4e6f8"/></radialGradient></defs><circle cx="9.4" cy="8.9" r="8.2" fill="url(#gk)" stroke="#3869ae" stroke-width="2"/><path d="M9.4 1.8V4.5M9.4 13.3V16M1.8 8.9H4.5M14.3 8.9H17" stroke="#3a6fb5" stroke-width="1.4"/><path d="M9.5 3.5V9.3L11 10.8" fill="none" stroke="#1d3d6d" stroke-width="1.6"/></svg>
<div class="a" style="left:652.80px;top:345.29px;font-size:15.6px;line-height:19px;font-weight:normal;color:#333;letter-spacing:-0.28px">Historical Correlation</div>
<div class="b" style="left:652px;top:202px;width:179px;height:1px;background:#9a9a9a;"></div>
<div class="b" style="left:652px;top:341px;width:179px;height:1px;background:#9a9a9a;"></div>
</body></html>
